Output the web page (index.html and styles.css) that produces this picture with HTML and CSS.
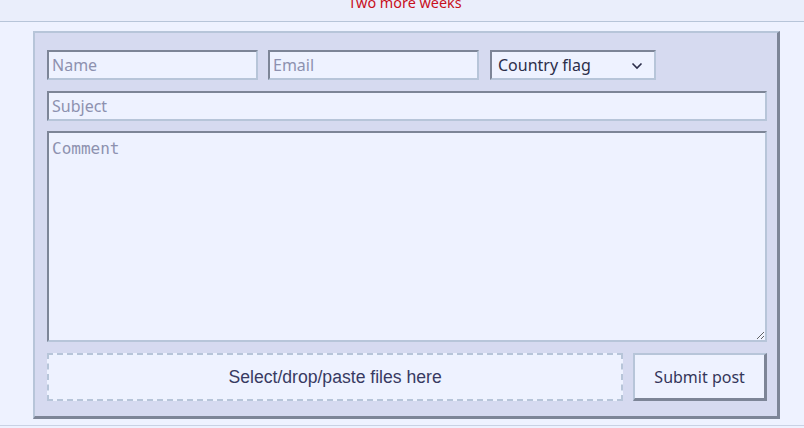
FILE: index.html
```html
<!DOCTYPE html>
<html lang="en">
<head>
    <meta charset="UTF-8">
    <meta name="viewport" content="width=device-width, initial-scale=1.0">
    <link rel="stylesheet" href="styles.css">
    <title>Post form</title>
</head>
<body>
    <div class="announce">
        <p class="announce-text">Two more weeks</p>
    </div>

    <form id="postForm" class="post-form">
        <div class="row">
            <input type="text" class="field field-name" placeholder="Name">
            <input type="text" class="field field-email" placeholder="Email">
            <div class="flag-wrap">
                <select class="field flag-select">
                    <option>Country flag</option>
                </select>
                <svg class="chevron" width="12" height="8" viewBox="0 0 12 8">
                    <path d="M1.5 1.5 L6 6 L10.5 1.5" fill="none" stroke="#2c2e4a" stroke-width="1.6"/>
                </svg>
            </div>
        </div>

        <input type="text" class="field field-subject" placeholder="Subject">

        <textarea class="field field-comment" placeholder="Comment"></textarea>

        <div class="row bottom-row">
            <div class="dropzone">Select/drop/paste files here</div>
            <button type="button" class="submit-btn">Submit post</button>
        </div>
    </form>

    <div class="divider"></div>
</body>
</html>
```

FILE: styles.css
```css
body {
    margin: 0;
    background-color: #eef2ff;
    font-family: 'Noto Sans', sans-serif;
    color: #2c2e4a;
}

.announce {
    height: 21px;
    overflow: hidden;
    background-color: #eaeefb;
    border-bottom: 1px solid #b7c5d9;
    text-align: center;
}

.announce-text {
    margin: -7px 0 0 6px;
    font-size: 14.4px;
    line-height: 20px;
    color: #c8101c;
}

.post-form {
    box-sizing: border-box;
    width: 747px;
    margin: 9px 0 0 33px;
    padding: 17px 10px 15px 12px;
    background-color: #d6daf0;
    border-style: solid;
    border-width: 2px 3px 3px 2px;
    border-color: #b7c5d9 #7d8597 #7d8597 #b7c5d9;
    display: flex;
    flex-direction: column;
}

.row {
    display: flex;
}

.field {
    box-sizing: border-box;
    margin: 0;
    padding: 0 3px;
    height: 30px;
    background-color: #eef2ff;
    border-style: solid;
    border-width: 2px;
    border-color: #7d8597 #b7c5d9 #b7c5d9 #7d8597;
    font-family: 'Noto Sans', sans-serif;
    font-size: 16px;
    color: #2c2e4a;
    outline: none;
}

.field::placeholder {
    color: #8d91af;
}

.field-name,
.field-email {
    width: 211px;
}

.field-name {
    margin-right: 10px;
}

.field-email {
    margin-right: 11px;
}

.flag-wrap {
    position: relative;
    width: 166px;
}

.flag-select {
    width: 166px;
    padding-left: 6px;
    appearance: none;
    -webkit-appearance: none;
    border-radius: 0;
}

.chevron {
    position: absolute;
    right: 13px;
    top: 12px;
    pointer-events: none;
}

.field-subject {
    width: 720px;
    margin-top: 11px;
}

.field-comment {
    width: 720px;
    height: 211px;
    margin-top: 10px;
    padding: 6px 3px;
    font-family: 'DejaVu Sans Mono', monospace;
    font-size: 16px;
    resize: both;
}

.bottom-row {
    margin-top: 11px;
    height: 48px;
}

.dropzone {
    box-sizing: border-box;
    width: 577px;
    height: 48px;
    margin-right: 10px;
    border: 2px dashed #b7c5d9;
    background-color: #eef2ff;
    display: flex;
    align-items: center;
    justify-content: center;
    font-family: 'Liberation Sans', Arial, sans-serif;
    font-size: 17.6px;
    color: #383a62;
}

.submit-btn {
    box-sizing: border-box;
    width: 134px;
    height: 48px;
    padding: 0;
    background-color: #eef2ff;
    border-style: solid;
    border-width: 2px 3px 3px 2px;
    border-color: #b7c5d9 #7d8597 #7d8597 #b7c5d9;
    font-family: 'Noto Sans', sans-serif;
    font-size: 16px;
    color: #34365a;
    cursor: pointer;
}

.divider {
    margin-top: 6px;
    border-top: 1px solid #c9d2e4;
}
```
